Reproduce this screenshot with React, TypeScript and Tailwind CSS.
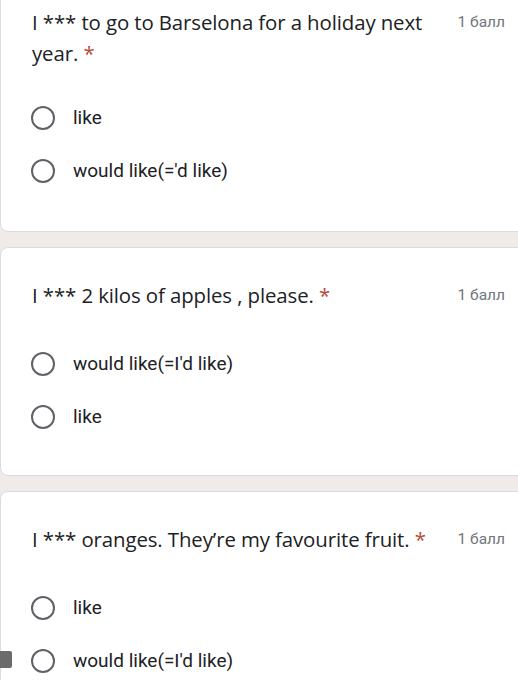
import React from "react";

type Question = {
  title: string;
  options: string[];
};

const questions: Question[] = [
  {
    title: "I *** to go to Barselona for a holiday next year.",
    options: ["like", "would like(='d like)"],
  },
  {
    title: "I *** 2 kilos of apples , please.",
    options: ["would like(=I'd like)", "like"],
  },
  {
    title: "I *** oranges. They\u2019re my favourite fruit.",
    options: ["like", "would like(=I'd like)"],
  },
];

function Radio() {
  return <span className="block h-[24px] w-[24px] shrink-0 rounded-full border-[2.5px] border-[#5f6368] bg-white" />;
}

function QuestionCard({ q, first }: { q: Question; first?: boolean }) {
  return (
    <div
      className={`-mr-4 rounded-lg border border-[#dadce0] bg-white pl-[31px] pr-[28px] ${
        first ? "-mt-[28px] pt-[34px] pb-[48px]" : "pt-[32px] pb-[46px]"
      }`}
    >
      <div className="flex items-start justify-between">
        <div className="w-[405px] text-[20.4px] leading-[31px] text-[#202124] font-['Open_Sans',sans-serif] tracking-[-0.1px]">
          {q.title} <span className="text-[#b8473a]">*</span>
        </div>
        <div className="pt-[2px] text-[15.5px] leading-[26px] text-[#70757a] font-['Roboto',sans-serif] whitespace-nowrap">
          1 балл
        </div>
      </div>
      <div className={`flex flex-col gap-[29px] ${first ? "mt-[37px]" : "mt-[41px]"}`}>
        {q.options.map((o) => (
          <label key={o} className="flex items-center gap-[18px] -ml-[1px]">
            <Radio />
            <span className="text-[19px] leading-[24px] text-[#202124] font-['Roboto',sans-serif]">{o}</span>
          </label>
        ))}
      </div>
    </div>
  );
}

export default function App() {
  return (
    <div className="relative h-[680px] w-[518px] overflow-hidden bg-[#f0ebe8]">
      <div className="flex flex-col gap-[15px]">
        {questions.map((q, i) => (
          <QuestionCard key={i} q={q} first={i === 0} />
        ))}
      </div>
      <div className="absolute left-0 top-[651px] h-[17px] w-[12px] rounded-r-[2px] bg-[#6b6b6b]" />
    </div>
  );
}
